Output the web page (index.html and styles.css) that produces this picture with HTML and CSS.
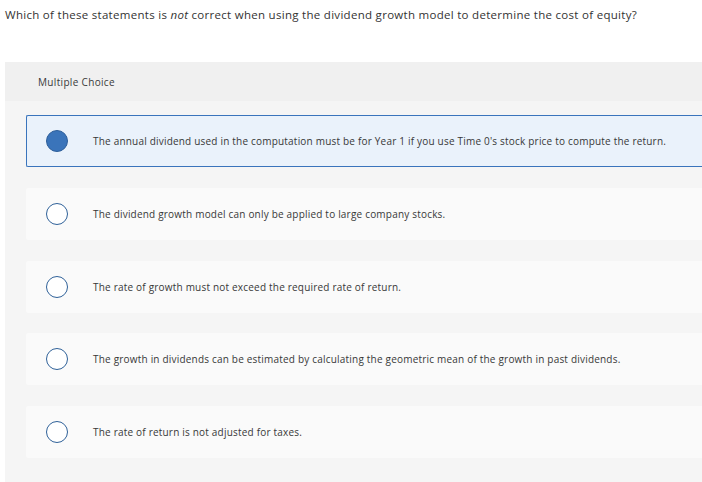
FILE: index.html
```html
<!DOCTYPE html>
<html>
<head>
<meta charset="utf-8">
<link rel="stylesheet" href="styles.css">
</head>
<body>
<p class="question">Which of these statements is <em>not</em> correct when using the dividend growth model to determine the cost of equity?</p>
<div class="panel">
  <div class="panel-head">Multiple Choice</div>
  <div class="panel-body">
    <div class="option selected"><span class="radio"></span><span class="label">The annual dividend used in the computation must be for Year 1 if you use Time 0's stock price to compute the return.</span></div>
    <div class="option"><span class="radio"></span><span class="label">The dividend growth model can only be applied to large company stocks.</span></div>
    <div class="option"><span class="radio"></span><span class="label">The rate of growth must not exceed the required rate of return.</span></div>
    <div class="option"><span class="radio"></span><span class="label">The growth in dividends can be estimated by calculating the geometric mean of the growth in past dividends.</span></div>
    <div class="option"><span class="radio"></span><span class="label">The rate of return is not adjusted for taxes.</span></div>
  </div>
</div>
</body>
</html>
```
FILE: styles.css
```css
html, body {
  margin: 0;
  padding: 0;
  overflow: hidden;
  background: #ffffff;
}
body {
  width: 702px;
  height: 482px;
  padding-left: 5px;
  box-sizing: border-box;
  font-family: "Open Sans", "Liberation Sans", sans-serif;
  color: #333333;
}
.question {
  margin: 0;
  padding-top: 7px;
  height: 62px;
  box-sizing: border-box;
  font-size: 11.5px;
  line-height: 16px;
  white-space: nowrap;
  letter-spacing: 0.29px;
}
.panel {
  height: 420px;
  background: #f5f5f5;
}
.panel-head {
  height: 39px;
  background: #f0f0f0;
  padding-left: 33px;
  display: flex;
  align-items: center;
  font-size: 10px;
  letter-spacing: 0.33px;
  color: #3a3a3a;
}
.panel-body {
  padding: 14px 0 0 21px;
  display: flex;
  flex-direction: column;
  gap: 20.75px;
}
.option {
  height: 52px;
  box-sizing: border-box;
  border: 1px solid transparent;
  border-right: none;
  border-radius: 2px 0 0 2px;
  background: #fafafa;
  display: flex;
  align-items: center;
  padding-left: 19px;
  font-size: 10px;
  letter-spacing: 0.2px;
  color: #383838;
  white-space: nowrap;
}
.option.selected {
  background: #eaf2fb;
  border-color: #3a74bc;
}
.radio {
  width: 22px;
  height: 22px;
  box-sizing: border-box;
  border-radius: 50%;
  border: 1.5px solid #2f6199;
  background: #ffffff;
  flex: none;
  margin-right: 25px;
}
.selected .radio {
  background: #3a74ba;
  border-color: #2e5f9a;
}
```
